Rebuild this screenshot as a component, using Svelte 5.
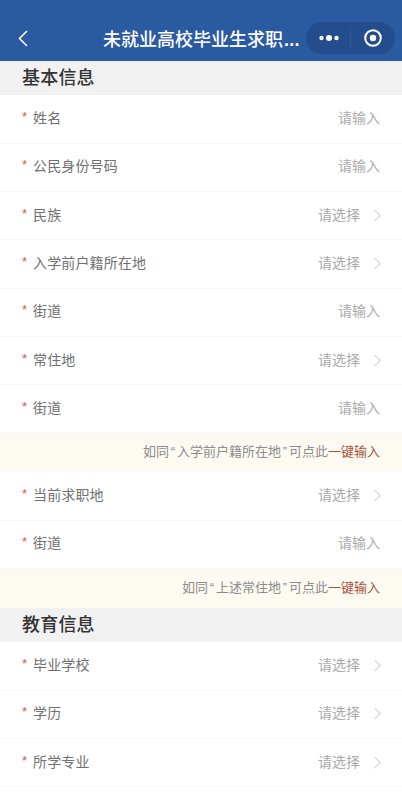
<script>
  const basic = [
    { label: '姓名', hint: '请输入' },
    { label: '公民身份号码', hint: '请输入' },
    { label: '民族', hint: '请选择', arrow: true },
    { label: '入学前户籍所在地', hint: '请选择', arrow: true },
    { label: '街道', hint: '请输入' },
    { label: '常住地', hint: '请选择', arrow: true },
    { label: '街道', hint: '请输入' }
  ];
  const current = [
    { label: '当前求职地', hint: '请选择', arrow: true },
    { label: '街道', hint: '请输入' }
  ];
  const education = [
    { label: '毕业学校', hint: '请选择', arrow: true },
    { label: '学历', hint: '请选择', arrow: true },
    { label: '所学专业', hint: '请选择', arrow: true }
  ];
</script>

{#snippet row(item)}
  <div class="row">
    <span class="star">*</span>
    <span class="label">{item.label}</span>
    <span class="hint" class:plain={!item.arrow}>{item.hint}</span>
    {#if item.arrow}
      <svg class="chev" width="7" height="13" viewBox="0 0 7 13" fill="none">
        <path d="M.6.8l5.6 5.7L.6 12.2" stroke="#d4d4d6" stroke-width="1.1" />
      </svg>
    {/if}
  </div>
{/snippet}

<div class="page">
  <header class="nav">
    <svg class="back" width="10" height="17" viewBox="0 0 10 17" fill="none">
      <path d="M9 1L1.5 8.5 9 16" stroke="#fff" stroke-width="1.6" />
    </svg>
    <div class="title">未就业高校毕业生求职<span class="dots">...</span></div>
    <div class="capsule">
      <svg width="22" height="8" viewBox="0 0 22 8" fill="#fff">
        <circle cx="3.5" cy="4" r="2.2" /><circle cx="11" cy="4" r="3" /><circle cx="18.5" cy="4" r="2.2" />
      </svg>
      <span class="sep"></span>
      <svg width="20" height="20" viewBox="0 0 20 20" fill="none">
        <circle cx="10" cy="10" r="7.8" stroke="#fff" stroke-width="2" /><circle cx="10" cy="10" r="3.2" fill="#fff" />
      </svg>
    </div>
  </header>

  <h2 class="section">基本信息</h2>
  {#each basic as item}{@render row(item)}{/each}
  <div class="notice">如同<span class="q">“</span>入学前户籍所在地<span class="q">”</span>可点此<em>一键输入</em></div>
  {#each current as item}{@render row(item)}{/each}
  <div class="notice">如同<span class="q">“</span>上述常住地<span class="q">”</span>可点此<em>一键输入</em></div>
  <h2 class="section">教育信息</h2>
  {#each education as item}{@render row(item)}{/each}
</div>

<style>
  :global(body) {
    margin: 0;
    background: #fff;
  }
  .page {
    height: 800px;
    overflow: hidden;
    font-family: "Noto Sans CJK SC", "Liberation Sans", sans-serif;
  }
  .nav {
    height: 61px;
    box-sizing: border-box;
    padding: 22px 7px 7px 18px;
    background: #2a5a9f;
    display: flex;
    align-items: center;
    color: #fff;
  }
  .back {
    flex: none;
  }
  .title {
    flex: 1;
    padding-left: 75px;
    font-size: 18px;
    font-weight: 500;
    white-space: nowrap;
  }
  .dots {
    font-family: "Liberation Sans", sans-serif;
    font-weight: 700;
    letter-spacing: 0.2px;
    margin-left: 1px;
  }
  .capsule {
    flex: none;
    width: 89px;
    height: 32px;
    border-radius: 16px;
    background: #244d8d;
    display: flex;
    align-items: center;
    box-sizing: border-box;
    padding-left: 12px;
  }
  .sep {
    width: 1px;
    height: 19px;
    background: #2f5a99;
    margin: 0 12px 0 10px;
  }
  .section {
    margin: 0;
    height: 34.4px;
    box-sizing: border-box;
    padding-left: 22px;
    background: #f1f1f2;
    color: #333;
    font-size: 18px;
    font-weight: 500;
    line-height: 30px;
    letter-spacing: 0.2px;
  }
  .row {
    height: 48.3px;
    box-sizing: border-box;
    border-bottom: 1px solid #f6f6f6;
    padding: 0 21px 4px 22px;
    display: flex;
    align-items: center;
    font-size: 14px;
  }
  .star {
    flex: none;
    width: 11px;
    color: #d6584c;
    font-family: "Liberation Sans", sans-serif;
    font-size: 13px;
    line-height: 14px;
  }
  .label {
    flex: 1;
    color: #707070;
    letter-spacing: 0.15px;
  }
  .hint {
    color: #aaa;
  }
  .hint.plain {
    margin-right: 1px;
  }
  .chev {
    margin: 3px 0 0 14px;
    flex: none;
  }
  .notice {
    height: 39px;
    padding-right: 22px;
    background: #fdfaf2;
    color: #8c8c8c;
    font-size: 13px;
    line-height: 36px;
    text-align: right;
  }
  .q {
    display: inline-block;
    width: 8px;
    text-align: center;
    font-family: "Liberation Sans", sans-serif;
  }
  .notice em {
    font-style: normal;
    color: #a5553f;
  }
</style>
